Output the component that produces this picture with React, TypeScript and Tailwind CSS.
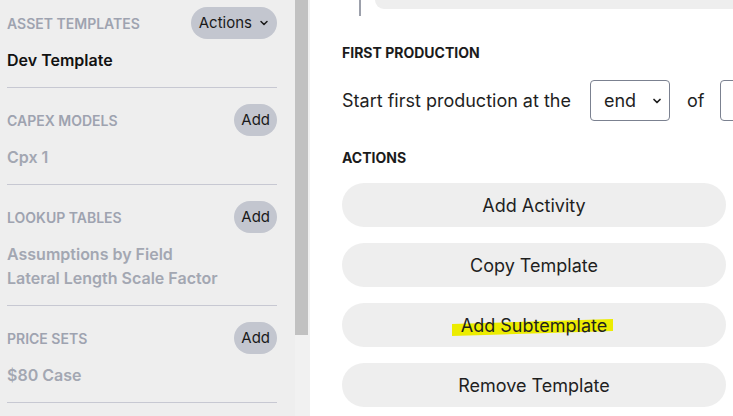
import { ChevronDown } from 'lucide-react';

const font = { fontFamily: 'Inter, "Noto Sans", sans-serif' };

function SectionHeader({ title, action }: { title: string; action: React.ReactNode }) {
    return (
        <div className="flex items-center justify-between h-8">
            <span className="text-[14px] font-semibold uppercase text-[#9ea3b0]">{title}</span>
            {action}
        </div>
    );
}

function AddButton() {
    return (
        <button className="h-8 px-[7px] rounded-full bg-[#c3c6cf] text-[15px] text-[#1a1a1a]">Add</button>
    );
}

function Section({ title, action, items, dark }: { title: string; action: React.ReactNode; items: string[]; dark?: boolean }) {
    return (
        <div className="border-b border-[#c7c8d2] pt-[16px] pb-[15px]">
            <SectionHeader title={title} action={action} />
            <div className="mt-[9px] flex flex-col">
                {items.map((item) => (
                    <div
                        key={item}
                        className={
                            dark
                                ? 'text-[16px] font-semibold text-[#111111] leading-6'
                                : 'text-[16px] font-semibold text-[#a3a7b2] leading-6'
                        }
                    >
                        {item}
                    </div>
                ))}
            </div>
        </div>
    );
}

const actions = ['Add Activity', 'Copy Template', 'Add Subtemplate', 'Remove Template'];

export default function App() {
    return (
        <div className="flex w-[733px] h-[416px] overflow-hidden bg-white" style={font}>
            <aside className="w-[295px] shrink-0 bg-[#eeeeee] pl-[7px] pr-[18px] -mt-[9px]">
                <Section
                    title="Asset Templates"
                    dark
                    action={
                        <button className="h-8 pl-[8px] pr-[7px] rounded-full bg-[#c3c6cf] text-[15px] text-[#1a1a1a] flex items-center gap-[6px]">
                            Actions
                            <ChevronDown className="w-[12px] h-[12px]" strokeWidth={3} />
                        </button>
                    }
                    items={['Dev Template']}
                />
                <Section title="Capex Models" action={<AddButton />} items={['Cpx 1']} />
                <Section
                    title="Lookup Tables"
                    action={<AddButton />}
                    items={['Assumptions by Field', 'Lateral Length Scale Factor']}
                />
                <Section title="Price Sets" action={<AddButton />} items={['$80 Case']} />
            </aside>

            <div className="w-[15px] shrink-0 bg-[#f1f1f1]">
                <div className="w-[13px] h-[335px] bg-[#c1c1c1]" />
            </div>

            <main className="flex-1 pl-[32px] pr-[8px] relative">
                <div className="flex h-[16px]">
                    <div className="ml-[17px] w-[2px] h-[16px] bg-[#9ca0ab]" />
                    <div className="ml-[14px] flex-1 h-[9px] bg-[#eeeeee] rounded-bl-[20px] -mr-[8px]" />
                </div>

                <h3 className="mt-[26px] text-[14px] font-bold text-[#1b1b1b] uppercase">First Production</h3>

                <div className="mt-[17px] flex items-center text-[18px] text-[#1f1f1f] whitespace-nowrap">
                    <span>Start first production at the</span>
                    <div className="ml-[19px] w-[80px] h-[41px] border border-[#7b8190] rounded-[4px] flex items-center justify-between pl-[13px] pr-[6px] shrink-0">
                        <span>end</span>
                        <ChevronDown className="w-[12px] h-[12px]" strokeWidth={3.5} />
                    </div>
                    <span className="ml-[17px]">of</span>
                    <div className="ml-[16px] w-[80px] h-[41px] border border-[#7b8190] rounded-[4px] shrink-0" />
                </div>

                <h3 className="mt-[26px] text-[14px] font-bold text-[#1b1b1b] uppercase">Actions</h3>

                <div className="mt-[15px] flex flex-col gap-[16px]">
                    {actions.map((label) => (
                        <button
                            key={label}
                            className="relative h-[44px] w-[384px] rounded-full bg-[#eeeeee] text-[18px] text-[#1f1f1f]"
                        >
                            {label === 'Add Subtemplate' && (
                                <svg
                                    className="absolute left-[110px] top-[16px]"
                                    width="162"
                                    height="18"
                                    viewBox="0 0 162 18"
                                >
                                    <polygon points="0,5 161,0 161,12 0,17" fill="#ecec00" />
                                </svg>
                            )}
                            <span className="relative">{label}</span>
                        </button>
                    ))}
                </div>
            </main>
        </div>
    );
}
